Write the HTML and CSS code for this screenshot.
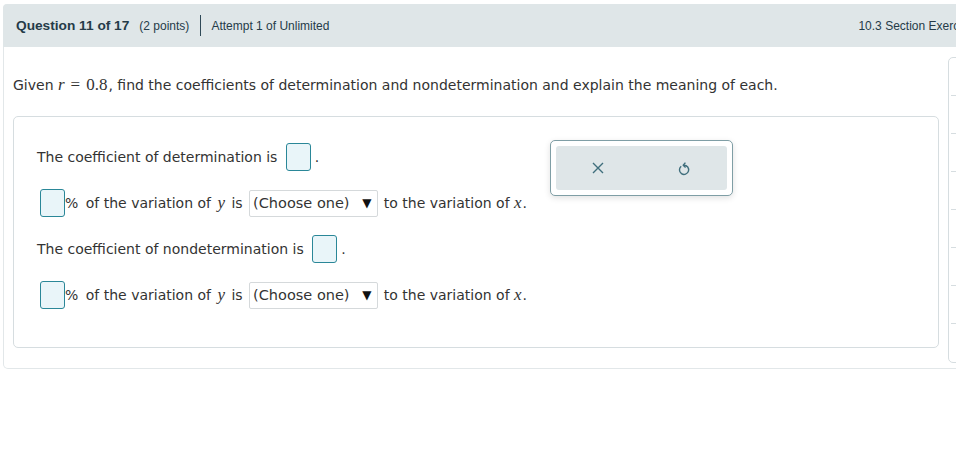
FILE: index.html
```html
<!DOCTYPE html>
<html>
<head>
<meta charset="utf-8">
<link rel="stylesheet" href="styles.css">
</head>
<body>
<div class="page">
  <div class="card">
    <div class="header">
      <span class="q-title">Question 11 of 17</span>
      <span class="q-points">(2 points)</span>
      <span class="q-sep"></span>
      <span class="q-attempt">Attempt 1 of Unlimited</span>
      <span class="q-section">10.3 Section Exercises</span>
    </div>
    <div class="content">
      <div class="main">
        <p class="prompt">Given <span class="mi">r</span><span class="mo">=</span><span class="mn">0.8</span>, find the coefficients of determination and nondetermination and explain the meaning of each.</p>
        <div class="answer-box">
          <div class="row">The coefficient of determination is <span class="blank ml"></span><span class="dot">.</span></div>
          <div class="row"><span class="blank first"></span><span class="pct">%</span> of the variation of <span class="mi var">y</span> is <span class="select">(Choose one) <span class="arrow">▼</span></span> to the variation of <span class="mi">x</span>.</div>
          <div class="row">The coefficient of nondetermination is <span class="blank ml"></span><span class="dot">.</span></div>
          <div class="row"><span class="blank first"></span><span class="pct">%</span> of the variation of <span class="mi var">y</span> is <span class="select">(Choose one) <span class="arrow">▼</span></span> to the variation of <span class="mi">x</span>.</div>
          <div class="toolbar">
            <div class="toolbar-inner">
              <svg class="tb-icon" width="14" height="14" viewBox="0 0 14 14"><path d="M2 2 L12 12 M12 2 L2 12" stroke="#3f6e7c" stroke-width="1.4" fill="none"/></svg>
              <svg class="tb-icon" width="14" height="16" viewBox="0 0 14 16"><path d="M4.2 6.2 A4.6 4.6 0 1 0 7 5.2" stroke="#3f6e7c" stroke-width="1.4" fill="none"/><path d="M8.4 2.6 L6.2 5.2 L8.6 7.4" stroke="#3f6e7c" stroke-width="1.4" fill="none" stroke-linejoin="round"/></svg>
            </div>
          </div>
        </div>
      </div>
      <div class="sidebar">
        <div class="sb-row"></div><div class="sb-row"></div><div class="sb-row"></div><div class="sb-row"></div><div class="sb-row"></div><div class="sb-row"></div><div class="sb-row"></div><div class="sb-row last"></div>
      </div>
    </div>
  </div>
</div>
</body>
</html>
```
FILE: styles.css
```css
html, body {
  margin: 0;
  padding: 0;
  background: #fff;
  overflow: hidden;
}
body {
  font-family: "DejaVu Sans", Verdana, sans-serif;
  color: #333;
  width: 956px;
  height: 458px;
}
.page {
  padding: 4px 0 0 3px;
}
.card {
  width: 1010px;
  border: 1px solid #e2e7e9;
  border-top: none;
  border-radius: 5px 0 0 5px;
}
.header {
  height: 43px;
  background: #dfe6e8;
  border-radius: 4px 0 0 0;
  margin: 0 0 0 -1px;
  display: flex;
  align-items: center;
  padding-left: 13px;
  font-family: "Liberation Sans", Arial, sans-serif;
  color: #253b48;
}
.q-title {
  font-weight: bold;
  font-size: 13.7px;
}
.q-points {
  font-size: 12px;
  margin-left: 10px;
}
.q-sep {
  width: 1px;
  height: 21px;
  background: #2f4957;
  margin: 0 10px 0 11px;
}
.q-attempt {
  font-size: 12px;
}
.q-section {
  font-size: 12px;
  margin-left: 529px;
}
.content {
  display: flex;
  align-items: flex-start;
  gap: 9px;
}
.main {
  width: 926px;
  padding-left: 9px;
  padding-bottom: 20px;
}
.prompt {
  margin: 30px 0 0 0;
  font-size: 14px;
  line-height: 16px;
}
.mi {
  font-family: "Liberation Serif", "Times New Roman", serif;
  font-style: italic;
  font-size: 17px;
}
.mo {
  font-family: "Liberation Serif", "Times New Roman", serif;
  font-size: 17px;
  margin: 0 6px 0 6px;
}
.mn {
  font-family: "Liberation Serif", "Times New Roman", serif;
  font-size: 17px;
  margin-right: 1px;
}
.answer-box {
  position: relative;
  margin-top: 23px;
  border: 1px solid #d6dde0;
  border-radius: 5px;
  padding: 26px 23px 38px;
  display: flex;
  flex-direction: column;
  gap: 18px;
  font-size: 14px;
}
.row {
  height: 28px;
  display: flex;
  align-items: center;
  white-space: pre;
}
.row .mi { margin-right: 1px; }
.row .mi.var { margin-left: 2px; margin-right: 2px; }
.pct { margin-right: 3px; }
.blank {
  display: inline-block;
  width: 23px;
  height: 26px;
  border: 1px solid #2a8798;
  border-radius: 3px;
  background: #e9f5f9;
}
.blank.ml { margin-left: 4px; }
.blank.first { margin-left: 3px; }
.dot { margin-left: 4px; }
.select {
  display: inline-flex;
  align-items: center;
  height: 25px;
  padding: 0 6px 0 3px;
  border: 1px solid #d5d9db;
  border-radius: 2px;
  font-size: 14.5px;
  margin: 0 1px 0 2px;
}
.arrow {
  font-size: 12px;
  margin-left: 8px;
  color: #111;
}
.toolbar {
  position: absolute;
  left: 536px;
  top: 23px;
  width: 171px;
  height: 44px;
  padding: 5px;
  background: #fff;
  border: 1px solid #7f9ea5;
  border-radius: 5px;
  box-shadow: 0 2px 6px rgba(0,0,0,0.12);
}
.toolbar-inner {
  height: 100%;
  background: #dfe6e8;
  border-radius: 3px;
  display: flex;
  align-items: center;
  justify-content: space-between;
  padding: 0 36px 0 35px;
}
.tb-icon { display: block; }
.sidebar {
  margin-top: 10px;
  width: 60px;
  height: 304px;
  border: 1px solid #d6dde0;
  border-radius: 5px;
  display: flex;
  flex-direction: column;
}
.sb-row {
  height: 37px;
  border-bottom: 1px solid #d6dde0;
  margin-left: 2px;
}
.sb-row.last { border-bottom: none; }
```
